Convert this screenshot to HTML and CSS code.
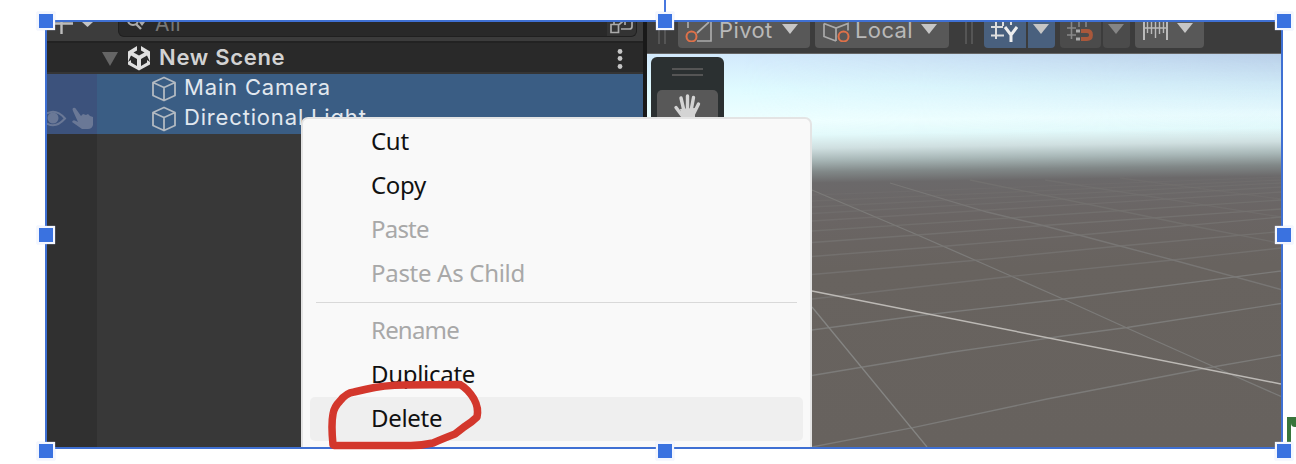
FILE: index.html
```html
<!DOCTYPE html>
<html lang="en">
<head>
<meta charset="utf-8">
<title>New Scene</title>
<link rel="stylesheet" href="styles.css">
</head>
<body>
<main class="stage">
  <div class="frame">
    <section class="hierarchy">
      <div class="search-bar">
        <svg class="add" width="50" height="19" viewBox="47 22 50 19"><path d="M54 23.5H73M61.5 22V34" stroke="#bdbdbd" stroke-width="2.4"/><path d="M82 22H93L87.500 27z" fill="#c4c4c4"/></svg>
        <div class="search">
          <svg width="24" height="14" viewBox="124 22 24 14"><circle cx="132" cy="20" r="5" fill="none" stroke="#aaa" stroke-width="2"/><path d="M135 24l5 5" stroke="#aaa" stroke-width="2.400"/><path d="M138 22h6l-3 4z" fill="#aaa"/></svg>
          <span class="query">All</span>
          <svg class="expand" width="29" height="14" viewBox="606 22 29 14"><path d="M610 24.500h7.500v8H610zM613 22v2.500M620 29h8.500q2.500 0 2.500-2.500V22M617.500 25l6-5M620 21h4v4" fill="none" stroke="#aaa" stroke-width="1.700"/></svg>
        </div>
      </div>
      <div class="scene-row">
        <svg class="fold" width="16" height="14" viewBox="0 0 16 14"><path d="M0 0h16L8 14z" fill="#656565"/></svg>
        <svg class="unity" width="24" height="26" viewBox="0 0 24 26"><path d="M10 1L1 6.500v13L12 25.500l11-6v-13L14 1v4.500l3.500 2L12 10.500l-5.500-3L10 5.500zM4 10.500l6 3.500v7l-6-3.500v-2.500l-3 2M20 10.500l-6 3.500v7l6-3.500v-2.500l3 2" fill="#e0e0e0" fill-rule="evenodd"/></svg>
        <span class="scene-name">New Scene</span>
        <svg class="more" width="6" height="22" viewBox="0 0 6 22"><g fill="#c6c6c6"><circle cx="3" cy="3.500" r="2.400"/><circle cx="3" cy="10.500" r="2.400"/><circle cx="3" cy="18.500" r="2.400"/></g></svg>
      </div>
      <div class="tree">
        <div class="gutter">
          <svg width="50" height="60" viewBox="47 74 50 60"><path d="M47 113.500q9-5 18 5-9 10-18 5" fill="none" stroke="#6a7896" stroke-width="2"/><circle cx="53" cy="118" r="5.500" fill="#6a7896"/><path d="M73 108q2-1 3 1l5 7 2-2 3 1 2-1 2 2 3 1v8q-1 4-5 4h-6l-10-7q1-3 4-1l2 1-5-11q-1-2 0-3z" fill="#6a7896"/></svg>
        </div>
        <div class="rows">
          <div class="row"><svg class="cube" viewBox="0 0 26 28"><path d="M13 2.500l11 5v13l-11 5-11-5v-13zM2 7.500l11 5 11-5M13 12.500v13"/></svg><span>Main Camera</span></div>
          <div class="row"><svg class="cube" viewBox="0 0 26 28"><path d="M13 2.500l11 5v13l-11 5-11-5v-13zM2 7.500l11 5 11-5M13 12.500v13"/></svg><span>Directional Light</span></div>
        </div>
      </div>
    </section>
    <section class="scene">
      <div class="toolbar">
        <i class="grip"></i>
        <div class="tool pivot"><svg width="27" height="20" viewBox="685 22 27 20"><path d="M688 22v6M697 41h14V22M697 33l12-11" fill="none" stroke="#aaa" stroke-width="1.700"/><circle cx="691.500" cy="36.500" r="5" fill="none" stroke="#df7149" stroke-width="2"/></svg><span>Pivot</span><b class="caret"></b></div>
        <div class="tool local"><svg width="28" height="20" viewBox="822 22 28 20"><path d="M824 23.500v13L836 41M824 23.500l12 4.500 12-4.500v7M836 28v13" fill="none" stroke="#aaa" stroke-width="1.700"/><circle cx="843.500" cy="36.500" r="5" fill="none" stroke="#df7149" stroke-width="2"/></svg><span>Local</span><b class="caret"></b></div>
        <i class="grip second"></i>
        <div class="tool snap-y"><svg width="28" height="21" viewBox="990 22 28 21"><path d="M991 27h12M991 35.500h13M996 22v17M1003 22v4M1011 22v3" stroke="#ddd" stroke-width="2"/><path d="M1005 27l6 8 6-8M1011 34v8" fill="none" stroke="#eee" stroke-width="3"/></svg></div>
        <div class="tool drop-y"><b class="caret"></b></div>
        <div class="tool magnet"><svg width="28" height="20" viewBox="1066 22 28 20"><path d="M1067 28h9M1067 35h9M1071.500 22v17M1079 22v5M1086 22v5" stroke="#888" stroke-width="1.600"/><path d="M1081 31h6q4 0 4 4t-4 4h-6" fill="none" stroke="#a9583b" stroke-width="3.800"/><path d="M1076 29.500h4v3h-4zM1076 37.500h4v3h-4z" fill="#aaa"/></svg></div>
        <div class="tool drop-magnet"><b class="caret"></b></div>
        <div class="tool ruler"><svg width="27" height="20" viewBox="1142 22 27 20"><path d="M1144 22v18M1167 22v18" stroke="#bbb" stroke-width="2"/><path d="M1144 28h23M1147.500 22v11M1151.500 22v12M1155.500 22v16M1159.500 22v12M1163.500 22v11" stroke="#bbb" stroke-width="1.400"/></svg><b class="caret"></b></div>
      </div>
      <div class="view">
        <svg class="ground" viewBox="647 54 634 393" preserveAspectRatio="none">
          <defs>
            <linearGradient id="sky" gradientUnits="userSpaceOnUse" x1="812" y1="54" x2="817.800" y2="447">
              <stop offset="0" stop-color="#d3eafc"/><stop offset=".09" stop-color="#e0fbff"/><stop offset=".17" stop-color="#efffff"/><stop offset=".205" stop-color="#e3fafb"/><stop offset=".24" stop-color="#cfdfe0"/><stop offset=".27" stop-color="#a8b7b7"/><stop offset=".3" stop-color="#818888"/><stop offset=".328" stop-color="#6b696a"/><stop offset=".42" stop-color="#6a6564"/><stop offset=".55" stop-color="#68635f"/><stop offset="1" stop-color="#67625e"/>
            </linearGradient>
            <linearGradient id="blue" x1="0" y1="0" x2="0" y2="1"><stop offset="0" stop-color="#b9cfe8"/><stop offset="1" stop-color="#d8f6ff" stop-opacity="0"/></linearGradient>
            <linearGradient id="side"><stop offset=".15" stop-color="#000"/><stop offset="1" stop-color="#fff"/></linearGradient>
            <mask id="fade"><rect x="647" y="54" width="634" height="90" fill="url(#side)"/></mask>
          </defs>
          <rect x="647" y="54" width="634" height="393" fill="url(#sky)"/>
          <rect x="647" y="54" width="634" height="82" fill="url(#blue)" mask="url(#fade)"/>
          <g fill="none" stroke="#7c7b79" stroke-width="1.300">
            <path d="M812 447L913 427.700 1047 399 1207 368 1281 355"/>
            <path d="M812 375.500L953 352 1063 336 1127 327.500 1281 303.500"/>
            <path d="M812 330L920 315.500 1060 299.500 1281 271"/>
            <path d="M812 307L927 447" stroke="#858583"/>
            <path d="M812 190L913 233 977 261 1063 299 1127 328 1220 369.500 1281 396.500"/>
            <path d="M890 183L987 212 1043 225.500 1120 246 1173 260 1281 289.500" opacity=".8"/>
          </g>
          <g fill="none" stroke="#777573" stroke-width="1.300" opacity=".75">
            <path d="M812 299L1010 276.500 1173 260 1281 248"/>
            <path d="M812 274.500L973 260.500 1120 246 1281 231.500"/>
            <path d="M812 256.500L947 246 1080 235 1281 217"/>
            <path d="M812 242.500L917 235 1043 225.500 1281 209"/>
            <path d="M812 231L1281 200" opacity=".8"/><path d="M812 221L1281 192" opacity=".7"/><path d="M812 213.500L1281 187" opacity=".6"/><path d="M812 207L1281 183" opacity=".5"/><path d="M812 201L1281 180" opacity=".4"/><path d="M812 195L1281 177" opacity=".3"/>
            <path d="M970 180L1150 217 1193 226 1281 243.500" opacity=".8"/><path d="M1045 180L1281 217" opacity=".6"/><path d="M1120 178L1281 199" opacity=".4"/>
          </g>
          <path d="M812 291L1281 384" stroke="#bcb9b5" stroke-width="1.500"/>
        </svg>
        <div class="tools-panel"><i class="handle-lines"></i><div class="hand"><svg width="28" height="28" viewBox="674 93 28 28"><path d="M677 107.500l6 8M682 98l3 13M688.500 96v14M694.500 97.500L692 111M699.500 104l-5 10" stroke="#d4d4d4" stroke-width="3.400" stroke-linecap="round"/><path d="M681 109l15-1v13h-12z" fill="#d4d4d4"/></svg></div></div>
      </div>
    </section>
    <nav class="menu">
      <div class="item">Cut</div>
      <div class="item">Copy</div>
      <div class="item off paste">Paste</div>
      <div class="item off child">Paste As Child</div>
      <hr>
      <div class="item off rename">Rename</div>
      <div class="item">Duplicate</div>
      <div class="item active">Delete</div>
    </nav>
  </div>
  <svg class="marker" viewBox="320 370 170 84"><path d="M333 445Q331 424 333 414 334 407 340 401 346 393 354 392L365 389.500Q384 385 405 385L460 384.500Q468 389 474 399 479 408 477 417 472 422 464 427L455 434Q442 439 433 443 420 446 407 445.500L334 445.500Z"/></svg>
  <i class="leaf"></i>
  <i class="stem"></i>
  <i class="knob tl"></i><i class="knob tc"></i><i class="knob tr"></i>
  <i class="knob ml"></i><i class="knob mr"></i>
  <i class="knob bl"></i><i class="knob bc"></i><i class="knob br"></i>
</main>
</body>
</html>
```
FILE: styles.css
```css
* { box-sizing: border-box; }
body { margin: 0; background: #fff; }
svg { display: block; flex: none; }
.stage { position: relative; width: 1296px; height: 464px; overflow: hidden; padding: 20px 0 0 45px; font-family: Inter, sans-serif; }
.frame { position: relative; display: flex; width: 1238px; height: 429px; border: 2px solid #3f70d3; background: #191919; overflow: hidden; }

/* Hierarchy panel */
.hierarchy { display: flex; flex-direction: column; width: 596px; margin-right: 4px; background: #383838; }
.search-bar { display: flex; height: 21px; background: #3c3c3c; border-bottom: 2px solid #222; }
.search { display: flex; width: 519px; height: 15px; margin-left: 21px; padding-left: 6px; background: #292929; border: 1px solid #202020; border-top: 0; border-radius: 0 0 6px 6px; overflow: hidden; }
.query { margin: -11px auto 0 6px; font-size: 21px; line-height: 25px; letter-spacing: .5px; color: #777; }
.expand { background: #333; }
.scene-row { display: flex; align-items: center; height: 31px; padding-left: 55px; background: #292929; border-bottom: 2px solid #353535; }
.fold { margin-top: 2px; }
.unity { margin-left: 9px; }
.scene-name { margin: -2px 0 0 8px; font-size: 22px; font-weight: 600; letter-spacing: .7px; color: #d2d2d2; white-space: nowrap; }
.more { margin: 2px 20px 0 auto; }
.tree { display: flex; flex: 1; }
.gutter { width: 50px; background: linear-gradient(#3c527c 60px, #303030 60px); }
.rows { flex: 1; }
.row { display: flex; align-items: center; height: 30px; padding-left: 54px; background: #3a5d84; color: #e2e8ef; font-size: 22px; letter-spacing: .83px; white-space: nowrap; }
.row span { margin-left: 7px; margin-top: -4px; }
.cube { width: 26px; height: 28px; fill: none; stroke: #b3bac2; stroke-width: 1.8; stroke-linejoin: round; }

/* Scene panel */
.scene { display: flex; flex-direction: column; width: 634px; }
.toolbar { display: flex; height: 32px; padding-left: 11px; background: #3c3c3c; border-bottom: 1px solid #666; }
.grip { width: 8px; height: 22px; margin-right: 12px; border: solid #555; border-width: 0 2px; }
.grip.second { margin: 0 11px 0 16px; }
.tool { display: flex; height: 26px; background: #585858; border-radius: 0 0 4px 4px; color: #b9b9b9; }
.tool span { margin-top: -4px; font-size: 22px; line-height: 25px; letter-spacing: .4px; }
.caret { width: 16px; height: 10px; margin-top: 2px; background: #c6c6c6; clip-path: polygon(0 0, 100% 0, 50% 100%); }
.pivot { width: 132px; padding-left: 7px; margin-right: 5px; }
.pivot span { width: 63px; margin-left: 7px; }
.local { width: 134px; padding-left: 7px; }
.local span { width: 66px; margin-left: 5px; }
.snap-y { width: 42px; margin-right: 2px; padding-left: 6px; background: #49607e; border-radius: 0 0 0 4px; }
.drop-y { width: 27px; margin-right: 5px; padding-left: 5px; background: #49607e; border-radius: 0 0 4px 0; }
.magnet { width: 41px; margin-right: 2px; padding-left: 6px; background: #4b4b4b; }
.drop-magnet { width: 27px; margin-right: 5px; padding-left: 5px; background: #4b4b4b; }
.drop-magnet .caret { background: #858585; }
.ruler { width: 69px; padding-left: 7px; }
.ruler .caret { margin-left: 8px; margin-top: 1px; }
.view { display: grid; flex: 1; }
.ground, .tools-panel { grid-area: 1 / 1; }
.ground { width: 634px; height: 393px; }
.tools-panel { z-index: 1; width: 73px; height: 120px; margin: 3px 0 0 4px; padding: 11px 6px; background: #2b3031; border-radius: 6px; }
.handle-lines { display: block; width: 31px; height: 8px; margin: 0 auto 14px; border: solid #555; border-width: 2px 0; }
.hand { height: 60px; padding: 3px 16px; background: #585858; border-radius: 5px; }

/* Context menu */
.menu { position: absolute; z-index: 2; left: 254px; top: 95px; width: 511px; height: 350px; padding: 1px 7px; background: #f9f9f9; border: 2px solid #e4e4e4; border-radius: 7px; font-family: "Noto Sans", sans-serif; }
.item { height: 44px; padding-left: 61px; font-size: 24px; line-height: 42px; letter-spacing: -.3px; color: #111; border-radius: 5px; }
.off { color: #a8a8a8; }
.paste, .rename { letter-spacing: -.8px; }
.active { background: #efefef; }
.menu hr { height: 1px; margin: 6px; border: 0; background: #d9d9d9; }

/* Annotation and selection handles */
.marker { position: absolute; z-index: 3; left: 320px; top: 370px; width: 170px; height: 84px; fill: none; stroke: #d3372c; stroke-width: 7.5; stroke-linejoin: round; }
.leaf { position: absolute; left: 1287px; top: 417px; width: 12px; height: 26px; border-left: 4px solid #38753b; }
.leaf::after { content: ""; display: block; width: 9px; height: 10px; background: #38753b; border-radius: 0 0 4px 4px; }
.stem { position: absolute; left: 664px; top: 0; width: 2px; height: 14px; background: #4878df; }
.knob { position: absolute; z-index: 4; width: 18px; height: 18px; background: #3a72e0; border: 2px solid #f3f6fe; box-shadow: 0 0 1px #c8d6f6; }
.tl, .tc, .tr { top: 12px; }
.ml, .mr { top: 226px; }
.bl, .bc, .br { top: 442px; }
.tl, .ml, .bl { left: 37px; }
.tc, .bc { left: 656px; }
.tr, .mr, .br { left: 1275px; }
```
